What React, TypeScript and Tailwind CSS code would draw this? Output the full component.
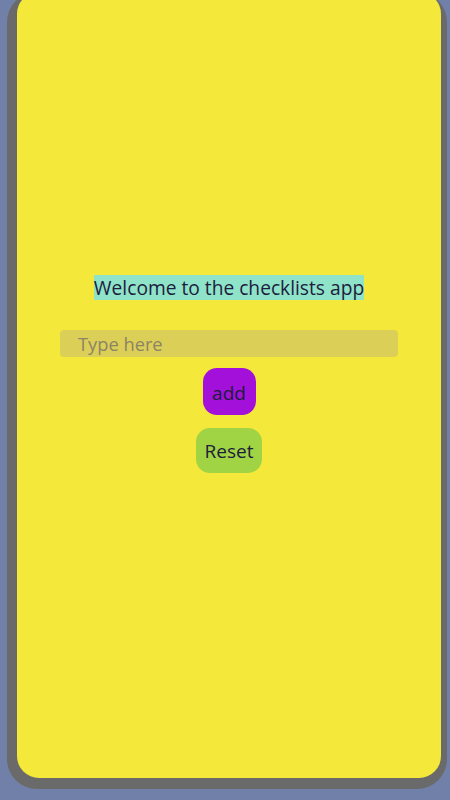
import { useState } from "react";

const App = () => {
  const [items, setItems] = useState<string[]>([]);
  const [text, setText] = useState("");

  return (
    <div className="h-[800px] overflow-hidden bg-[#7080a8] pl-[7px] pr-[3px]" style={{ fontFamily: '"Open Sans", sans-serif' }}>
      <div className="-mt-[8px] h-[797px] rounded-[30px] bg-[#6a6a6a] pb-[11px] pl-[10px] pr-[6px]">
        <div className="flex h-full flex-col items-center rounded-[22px] bg-[#f4e83a] pt-[283px]">
          <span className="bg-[#8fe3c9] text-[19.2px] leading-[25px] text-[#1c1c3c]">Welcome to the checklists app</span>
          <input
            value={text}
            onChange={(e) => setText(e.target.value)}
            placeholder="Type here"
            className="mt-[30px] h-[27px] w-[338px] rounded-[4px] bg-[#dccf58] px-[18px] text-[18.3px] text-[#1c1c3c] outline-none placeholder:text-[#8c8466]"
          />
          <button
            onClick={() => {
              if (text) setItems([...items, text]);
              setText("");
            }}
            className="mt-[11px] h-[47px] w-[53px] rounded-[14px] bg-[#a310d9] pt-[3px] text-[19px] text-[#1c1c3c]"
          >
            add
          </button>
          <button
            onClick={() => setItems([])}
            className="mt-[13px] h-[45px] w-[66px] rounded-[14px] bg-[#a1d444] pt-[2px] text-[19px] text-[#1c1c3c]"
          >
            Reset
          </button>
          {items.map((it, i) => (
            <div key={i} className="mt-2 text-[19px] text-[#1c1c3c]">{it}</div>
          ))}
        </div>
      </div>
    </div>
  );
};

export default App;
